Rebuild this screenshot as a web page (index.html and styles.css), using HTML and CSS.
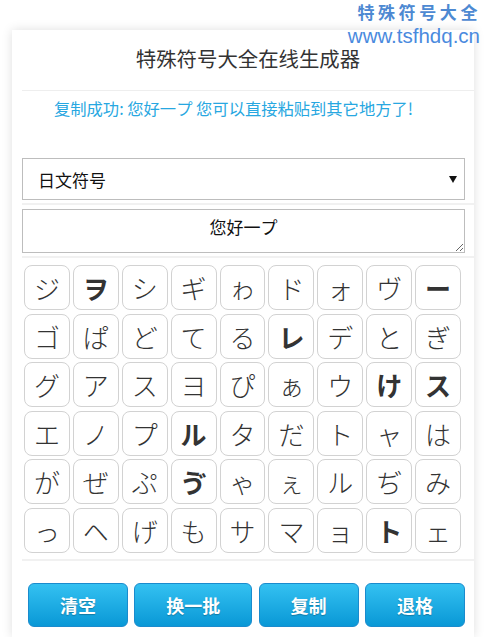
FILE: index.html
```html
<!DOCTYPE html>
<html lang="zh-CN">
<head>
    <meta charset="UTF-8">
    <meta name="viewport" content="width=device-width, initial-scale=1.0">
    <title>特殊符号大全在线生成器</title>
    <link rel="stylesheet" href="styles.css">
</head>
<body>
    <div class="watermark">
        <div class="wm-name">特殊符号大全</div>
        <div class="wm-url">www.tsfhdq.cn</div>
    </div>

    <div class="card">
        <h1 class="title">特殊符号大全在线生成器</h1>
        <p class="msg">复制成功: 您好一プ 您可以直接粘贴到其它地方了!</p>

        <div class="select-wrap">
            <select class="type-select">
                <option>日文符号</option>
                <option>韩文符号</option>
                <option>数学符号</option>
            </select>
        </div>
        <div class="divider"></div>
        <textarea class="output">您好一プ</textarea>
        <div class="divider"></div>

        <div class="symbols" id="symbols">
            <!-- symbols inserted below -->
        </div>

        <div class="divider"></div>

        <div class="actions">
            <button class="btn">清空</button>
            <button class="btn">换一批</button>
            <button class="btn">复制</button>
            <button class="btn">退格</button>
        </div>
    </div>

    <script>
        // one batch of kana; entries starting with * use the heavy face
        const symbols = [
            'ジ', '*ヲ', 'シ', 'ギ', 'ゎ', 'ド', 'ォ', 'ヴ', '*ー',
            'ゴ', 'ぱ', 'ど', 'て', 'る', '*レ', 'デ', 'と', 'ぎ',
            'グ', 'ア', 'ス', 'ヨ', 'ぴ', 'ぁ', 'ウ', '*け', '*ス',
            'エ', 'ノ', 'プ', '*ル', 'タ', 'だ', 'ト', 'ャ', 'は',
            'が', 'ぜ', 'ぷ', '*ゔ', 'ゃ', 'ぇ', 'ル', 'ぢ', 'み',
            'っ', 'ヘ', 'げ', 'も', 'サ', 'マ', 'ョ', '*ト', 'ェ'
        ];
        const box = document.getElementById('symbols');
        symbols.forEach(s => {
            const cell = document.createElement('span');
            cell.className = 'sym';
            if (s[0] === '*') {
                cell.classList.add('heavy');
                s = s.slice(1);
            }
            cell.textContent = s;
            box.appendChild(cell);
        });
    </script>
</body>
</html>
```

FILE: styles.css
```css
body {
    margin: 0;
    padding: 0;
    background: #fff;
    font-family: "Noto Sans CJK SC", "Liberation Sans", sans-serif;
    color: #333;
    height: 637px;
    overflow: hidden;
    position: relative;
}
.watermark {
    position: absolute;
    top: 0;
    right: 6px;
    z-index: 5;
    text-align: right;
}
.wm-name {
    color: #4d89d2;
    font-size: 17px;
    font-weight: bold;
    letter-spacing: 3.6px;
    line-height: 24px;
    margin-right: -3px;
}
.wm-url {
    color: #4a8ade;
    font-family: "Liberation Sans", Arial, sans-serif;
    font-size: 20.5px;
    line-height: 24px;
    margin-right: -2px;
}
.card {
    margin: 30px 0 0 12px;
    width: 452px;
    padding-left: 10px;
    height: 607px;
    background: #fff;
    box-shadow: 0 0 10px rgba(0, 0, 0, 0.13);
}
.title {
    margin: 0;
    height: 45px;
    padding-top: 16px;
    margin-left: -10px;
    padding-left: 10px;
    font-size: 20.4px;
    font-weight: normal;
    line-height: 24px;
    text-align: center;
    color: #333;
    position: relative;
}
.title::after {
    content: "";
    position: absolute;
    left: 10px;
    right: 0;
    bottom: 0;
    border-bottom: 1px solid #eee;
}
.msg {
    margin: 0 0 40px;
    padding: 7px 0 0 32px;
    font-size: 16.3px;
    line-height: 20px;
    color: #27a7e1;
}
.select-wrap {
    position: relative;
    width: 443px;
}
.select-wrap::after {
    content: "";
    position: absolute;
    right: 8px;
    top: 18px;
    border-left: 4px solid transparent;
    border-right: 4px solid transparent;
    border-top: 7px solid #111;
}
.type-select {
    display: block;
    width: 443px;
    height: 42px;
    margin: 0;
    padding: 0 0 0 15px;
    border: 1px solid #bdbdbd;
    border-radius: 0;
    background: #fff;
    font-family: "Noto Sans CJK SC", sans-serif;
    font-size: 17px;
    color: #111;
    appearance: none;
    -webkit-appearance: none;
}
.divider {
    height: 2px;
    background: #f1f1f1;
    margin-top: 3px;
}
.output {
    display: block;
    box-sizing: border-box;
    width: 443px;
    height: 44px;
    margin: 4px 0 0;
    padding: 7px 0 0;
    border: 1px solid #bdbdbd;
    font-family: "Noto Sans CJK SC", "Noto Sans CJK JP", sans-serif;
    font-size: 17px;
    line-height: 20px;
    text-align: center;
    color: #111;
}
.symbols {
    display: grid;
    grid-template-columns: repeat(9, 1fr);
    grid-auto-rows: 45px;
    column-gap: 3px;
    row-gap: 3.6px;
    width: 437px;
    margin: 7px 0 0 2px;
}
.sym {
    display: flex;
    align-items: center;
    justify-content: center;
    border: 1px solid #d2d2d2;
    border-radius: 8px;
    font-family: "Noto Sans CJK JP", sans-serif;
    font-size: 26px;
    font-weight: 300;
    color: #333;
    background: #fff;
}
.sym.heavy {
    font-weight: bold;
}
.symbols + .divider {
    margin-top: 6px;
}
.actions {
    display: flex;
    gap: 6.3px;
    margin: 22px 0 0 6px;
}
.btn {
    height: 44px;
    padding: 0 31px;
    border: 1px solid #1a8bcd;
    border-radius: 6px;
    background: linear-gradient(#34c1f1, #0998d6);
    color: #fff;
    font-family: "Noto Sans CJK SC", sans-serif;
    font-size: 18px;
    font-weight: bold;
    text-shadow: 0 1px 1px rgba(0, 0, 0, 0.25);
    cursor: pointer;
}
```
